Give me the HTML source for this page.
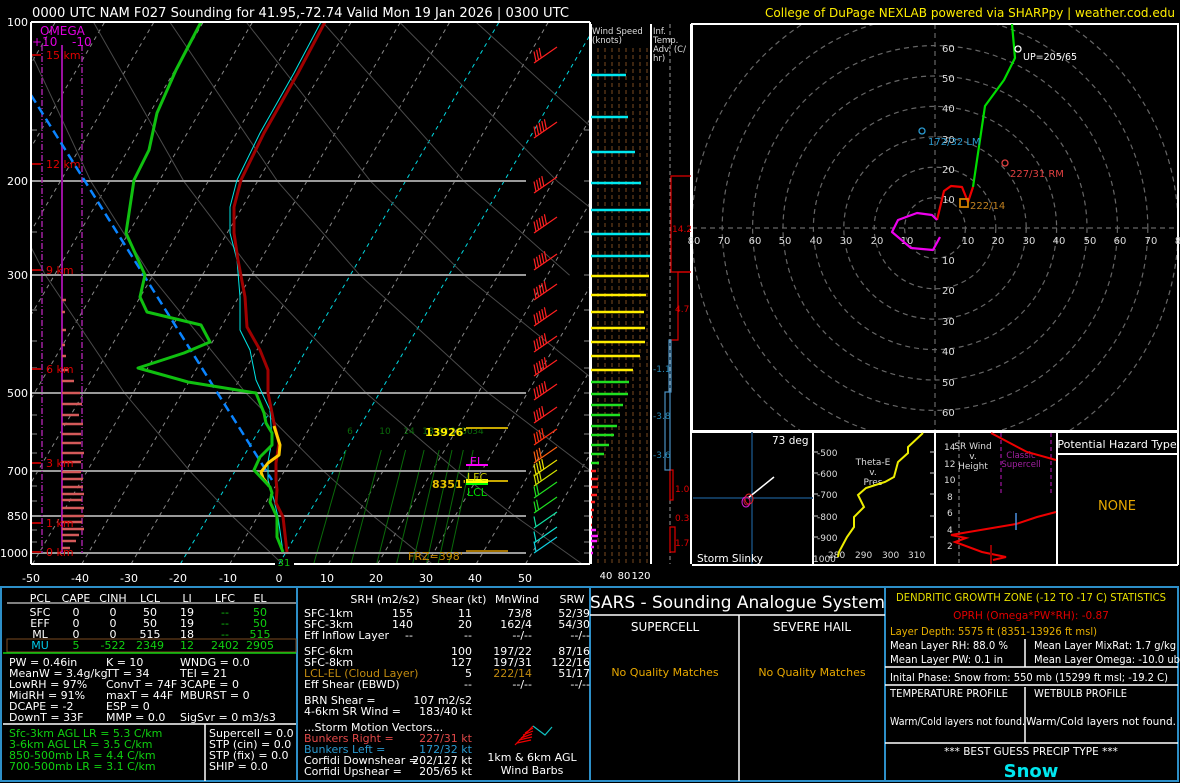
<!DOCTYPE html>
<html><head><meta charset="utf-8"><style>
html,body{margin:0;padding:0;background:#000;width:1180px;height:783px;overflow:hidden}
svg{display:block;font-family:"DejaVu Sans","Liberation Sans",sans-serif}
</style></head><body>
<svg width="1180" height="783" viewBox="0 0 1180 783" xmlns="http://www.w3.org/2000/svg">
<rect width="1180" height="783" fill="#000"/>
<defs>
<clipPath id="skc"><rect x="31" y="22" width="559" height="542"/></clipPath>
<clipPath id="hc"><rect x="692" y="24" width="486" height="407"/></clipPath>
<path id="b1" d="M534,8 L557,-8 M536,6.5 l-2,-10"/>
<path id="b2" d="M534,8 L557,-8 M536,6.5 l-2,-10 M538.6,4.7 l-2,-10"/>
<path id="b3" d="M534,8 L557,-8 M536,6.5 l-2,-10 M538.6,4.7 l-2,-10 M541.2,2.9 l-2,-10"/>
<path id="b4" d="M534,8 L557,-8 M536,6.5 l-2,-10 M538.6,4.7 l-2,-10 M541.2,2.9 l-2,-10 M543.8,1.1 l-2,-10"/>
<path id="b5" d="M534,8 L557,-8 M536,6.5 l-2,-10 M538.6,4.7 l-2,-10 M541.2,2.9 l-2,-10 M543.8,1.1 l-2,-10 M546.4,-0.7 l-2,-10"/>
</defs>
<g clip-path="url(#skc)" fill="none">
<g stroke="#888" stroke-width="1" stroke-dasharray="4 4">
<line x1="-263.3" y1="564" x2="55.4" y2="22"/><line x1="-214" y1="564" x2="104.7" y2="22"/><line x1="-164.7" y1="564" x2="154" y2="22"/><line x1="-115.4" y1="564" x2="203.3" y2="22"/><line x1="-66.1" y1="564" x2="252.6" y2="22"/><line x1="-16.8" y1="564" x2="301.9" y2="22"/><line x1="32.5" y1="564" x2="351.2" y2="22"/><line x1="81.8" y1="564" x2="400.5" y2="22"/><line x1="131.1" y1="564" x2="449.8" y2="22"/><line x1="229.7" y1="564" x2="548.4" y2="22"/><line x1="328.3" y1="564" x2="647" y2="22"/><line x1="377.6" y1="564" x2="696.3" y2="22"/><line x1="426.9" y1="564" x2="745.6" y2="22"/><line x1="476.2" y1="564" x2="794.9" y2="22"/><line x1="525.5" y1="564" x2="844.2" y2="22"/>
</g>
<g stroke="#00d8e0" stroke-width="1" stroke-dasharray="4 4"><line x1="180.4" y1="564" x2="499.1" y2="22"/><line x1="279" y1="564" x2="597.7" y2="22"/></g>
<g stroke="#4a4a4a" stroke-width="1">
<polyline points="282.4,564 231.6,515.5 189.5,470.7 124.6,393.1 45.5,275.3 -2.6,181.8"/>
<polyline points="432.3,564 372.6,515.5 323.1,470.7 245.9,393.1 150.5,275.3 91.1,181.8 16.5,22"/>
<polyline points="582.2,564 514.1,515.5 456.7,470.7 366.2,393.1 255,275.3 184.2,181.8 93.4,22"/>
<polyline points="732,564 655,515.5 590.3,470.7 488.5,393.1 360.1,275.3 277.9,181.8 169.8,22"/>
<polyline points="882,564 796,515.5 724,470.7 610,393.1 464.6,275.3 371.1,181.8 246.2,22"/>
<polyline points="569.6,275.3 464.5,181.8 322.6,22"/>
<polyline points="674.6,275.3 557.9,181.8 399.5,22"/>
<polyline points="651,181.8 475.9,22"/>
<polyline points="552.3,22 600,-20"/>
</g>
<g stroke="#0a6a0a" stroke-width="1">
<line x1="313.7" y1="564" x2="346" y2="450"/><line x1="351" y1="564" x2="381.3" y2="450"/><line x1="376.7" y1="564" x2="405.6" y2="450"/><line x1="396.5" y1="564" x2="424.1" y2="450"/><line x1="412.6" y1="564" x2="439.2" y2="450"/><line x1="426.4" y1="564" x2="452" y2="450"/><line x1="438.1" y1="564" x2="463.3" y2="450"/><line x1="448.6" y1="564" x2="473.2" y2="450"/>
</g>
</g>
<!-- isobars -->
<g stroke="#9a9a9a" stroke-width="2">
<line x1="31" y1="181" x2="526" y2="181"/><line x1="31" y1="275" x2="526" y2="275"/>
<line x1="31" y1="393" x2="526" y2="393"/><line x1="31" y1="471" x2="526" y2="471"/>
<line x1="31" y1="516" x2="526" y2="516"/><line x1="31" y1="553" x2="526" y2="553"/>
</g>
<g stroke="#888" stroke-width="1">
<line x1="31" y1="130" x2="37" y2="130"/><line x1="31" y1="232" x2="37" y2="232"/><line x1="31" y1="310" x2="37" y2="310"/><line x1="31" y1="341" x2="37" y2="341"/><line x1="31" y1="368" x2="37" y2="368"/><line x1="31" y1="415" x2="37" y2="415"/><line x1="31" y1="434" x2="37" y2="434"/><line x1="31" y1="453" x2="37" y2="453"/><line x1="31" y1="486" x2="37" y2="486"/><line x1="31" y1="501" x2="37" y2="501"/><line x1="31" y1="530" x2="37" y2="530"/><line x1="31" y1="542" x2="37" y2="542"/>
<line x1="584" y1="130" x2="590" y2="130"/><line x1="584" y1="181" x2="590" y2="181"/><line x1="584" y1="232" x2="590" y2="232"/><line x1="584" y1="275" x2="590" y2="275"/><line x1="584" y1="310" x2="590" y2="310"/><line x1="584" y1="341" x2="590" y2="341"/><line x1="584" y1="368" x2="590" y2="368"/><line x1="584" y1="393" x2="590" y2="393"/><line x1="584" y1="415" x2="590" y2="415"/><line x1="584" y1="434" x2="590" y2="434"/><line x1="584" y1="453" x2="590" y2="453"/><line x1="584" y1="471" x2="590" y2="471"/><line x1="584" y1="486" x2="590" y2="486"/><line x1="584" y1="501" x2="590" y2="501"/><line x1="584" y1="516" x2="590" y2="516"/><line x1="584" y1="530" x2="590" y2="530"/><line x1="584" y1="542" x2="590" y2="542"/><line x1="584" y1="553" x2="590" y2="553"/>
</g>
<!-- omega -->
<g stroke="#a020a0" stroke-width="1.5" stroke-dasharray="6 2 1 2"><line x1="42" y1="45" x2="42" y2="553"/><line x1="82" y1="45" x2="82" y2="553"/></g>
<line x1="62" y1="45" x2="62" y2="553" stroke="#9a10a0" stroke-width="2"/>
<g stroke="#d45a5a" stroke-width="2.5">
<line x1="62" y1="300" x2="66" y2="300"/><line x1="62" y1="312" x2="65" y2="312"/><line x1="62" y1="330" x2="66" y2="330"/><line x1="62" y1="345" x2="65" y2="345"/><line x1="62" y1="356" x2="66" y2="356"/><line x1="62" y1="370" x2="68" y2="370"/><line x1="62" y1="381" x2="74" y2="381"/><line x1="62" y1="393" x2="80" y2="393"/><line x1="62" y1="404" x2="82" y2="404"/><line x1="62" y1="415" x2="79" y2="415"/><line x1="62" y1="424" x2="83" y2="424"/><line x1="62" y1="434" x2="81" y2="434"/><line x1="62" y1="443" x2="81" y2="443"/><line x1="62" y1="453" x2="84" y2="453"/><line x1="62" y1="462" x2="81" y2="462"/><line x1="62" y1="472" x2="81" y2="472"/><line x1="62" y1="479" x2="83" y2="479"/><line x1="62" y1="487" x2="83" y2="487"/><line x1="62" y1="494" x2="84" y2="494"/><line x1="62" y1="500" x2="82" y2="500"/><line x1="62" y1="508" x2="84" y2="508"/><line x1="62" y1="516" x2="84" y2="516"/><line x1="62" y1="522" x2="82" y2="522"/><line x1="62" y1="529" x2="84" y2="529"/><line x1="62" y1="535" x2="79" y2="535"/><line x1="62" y1="541" x2="76" y2="541"/><line x1="62" y1="548" x2="70" y2="548"/>
</g>
<g fill="#e00000" font-size="11">
<text x="46" y="59">15 km</text><text x="46" y="168">12 km</text><text x="46" y="274">9 km</text><text x="46" y="373">6 km</text><text x="46" y="467">3 km</text><text x="46" y="527">1 km</text><text x="46" y="556">0 km</text>
</g>
<g stroke="#b00000" stroke-width="2"><line x1="31" y1="55" x2="41" y2="55"/><line x1="31" y1="164" x2="41" y2="164"/><line x1="31" y1="270" x2="41" y2="270"/><line x1="31" y1="369" x2="41" y2="369"/><line x1="31" y1="463" x2="41" y2="463"/><line x1="31" y1="523" x2="41" y2="523"/><line x1="31" y1="552" x2="41" y2="552"/></g>
<text x="40" y="35" fill="#e000e0" font-size="12">OMEGA</text>
<text x="32" y="46" fill="#e000e0" font-size="12">+10</text><text x="72" y="46" fill="#e000e0" font-size="12">-10</text>
<!-- profiles -->
<g clip-path="url(#skc)" fill="none" stroke-linejoin="round">
<polyline stroke="#0a84ff" stroke-width="2.5" stroke-dasharray="9 5" points="31,95 272,480"/>
<polyline stroke="#00e5e5" stroke-width="1" points="321,22 294,73 260,133 237,180 230,207 230,233 237,260 240,297 240,330 250,350 256,380 262,393 270,410 272,440 268,462 268,480 274,500 278,517 283,552"/>
<polyline stroke="#a00000" stroke-width="3" points="325,22 298,73 264,133 241,180 234,207 234,233 238,260 245,297 247,327 260,350 268,370 268,393 274,423 279,443 276,463 276,480 277,490 276,503 283,517 287,552"/>
<polyline stroke="#ffcc00" stroke-width="3" points="274,426 280,445 279,455 268,463 261,472 263,478 269,486"/>
<polyline stroke="#10c010" stroke-width="3" points="201,22 176,70 157,113 149,150 134,180 126,233 145,275 140,297 147,312 201,325 210,342 184,353 138,368 188,382 256,393 264,413 266,423 272,433 272,445 260,457 254,470 270,487 272,493 270,502 277,517 277,537 283,552"/>
</g>
<!-- frame -->
<g stroke="#fff" stroke-width="2"><line x1="31" y1="22" x2="590" y2="22"/><line x1="31" y1="564" x2="275" y2="564"/><line x1="294" y1="564" x2="590" y2="564"/><line x1="31" y1="22" x2="31" y2="564"/><line x1="590" y1="22" x2="590" y2="564"/></g>
<text x="284" y="566" fill="#10c010" font-size="10" text-anchor="middle">31</text>
<g fill="#fff" font-size="11" text-anchor="end">
<text x="28" y="26">100</text><text x="28" y="185">200</text><text x="28" y="279">300</text><text x="28" y="397">500</text><text x="28" y="475">700</text><text x="28" y="520">850</text><text x="28" y="557">1000</text>
</g>
<g fill="#fff" font-size="11" text-anchor="middle">
<text x="31" y="582">-50</text><text x="80" y="582">-40</text><text x="129" y="582">-30</text><text x="178" y="582">-20</text><text x="228" y="582">-10</text><text x="279" y="582">0</text><text x="327" y="582">10</text><text x="376" y="582">20</text><text x="426" y="582">30</text><text x="475" y="582">40</text><text x="525" y="582">50</text>
</g>
<!-- markers -->
<g font-size="9" fill="#0a6a0a" text-anchor="middle"><text x="350" y="434">6</text><text x="385" y="434">10</text><text x="409" y="434">14</text><text x="428" y="434">18</text><text x="443" y="434">22</text><text x="456" y="434">26</text><text x="467" y="434">30</text><text x="478" y="434">34</text></g>
<line x1="466" y1="428" x2="508" y2="428" stroke="#c8a800" stroke-width="2"/>
<text x="425" y="436" fill="#ffee00" font-size="11" font-weight="bold">13926'</text>
<line x1="466" y1="481" x2="508" y2="481" stroke="#c8a800" stroke-width="2"/>
<text x="432" y="488" fill="#e8c000" font-size="11" font-weight="bold">8351'</text>
<line x1="466" y1="551" x2="508" y2="551" stroke="#a07000" stroke-width="2"/>
<text x="408" y="560" fill="#c88a00" font-size="11">FRZ=398'</text>
<line x1="466" y1="465" x2="488" y2="465" stroke="#ff00ff" stroke-width="2"/>
<text x="470" y="465" fill="#ff00ff" font-size="11">EL</text>
<rect x="466" y="479" width="22" height="4" fill="#ffff00"/>
<text x="467" y="481" fill="#cccc00" font-size="11">LFC</text>
<line x1="466" y1="484" x2="488" y2="484" stroke="#00ff00" stroke-width="2"/>
<text x="467" y="496" fill="#00dd00" font-size="11">LCL</text>
<!-- barbs -->
<g fill="none" stroke-width="1.2">
<use href="#b3" y="55" stroke="#ff2020"/><use href="#b5" y="130" stroke="#ff2020"/><use href="#b4" y="185" stroke="#ff2020"/><use href="#b5" y="225" stroke="#ff2020"/><use href="#b5" y="262" stroke="#ff2020"/><use href="#b5" y="292" stroke="#ff2020"/><use href="#b5" y="318" stroke="#ff2020"/><use href="#b5" y="344" stroke="#ff2020"/><use href="#b5" y="368" stroke="#ff2020"/><use href="#b5" y="392" stroke="#ff2020"/><use href="#b4" y="415" stroke="#ff2020"/><use href="#b4" y="437" stroke="#ff3010"/><use href="#b3" y="455" stroke="#ff6010"/><use href="#b4" y="468" stroke="#e8e000"/><use href="#b3" y="478" stroke="#d0e000"/><use href="#b2" y="490" stroke="#20e020"/><use href="#b2" y="505" stroke="#20e020"/><use href="#b1" y="520" stroke="#10e0a0"/><use href="#b1" y="535" stroke="#10e0d0"/><use href="#b1" y="545" stroke="#10d0e0"/>
</g>
<!-- wind speed panel -->
<line x1="591" y1="24" x2="591" y2="564" stroke="#fff" stroke-width="2"/>
<line x1="651" y1="24" x2="651" y2="564" stroke="#fff" stroke-width="2"/>
<g stroke="#7a4a20" stroke-dasharray="4 3"><line x1="598" y1="48" x2="598" y2="564"/><line x1="605" y1="48" x2="605" y2="564"/><line x1="612" y1="48" x2="612" y2="564"/><line x1="619" y1="48" x2="619" y2="564"/><line x1="626" y1="48" x2="626" y2="564"/><line x1="633" y1="48" x2="633" y2="564"/><line x1="640" y1="48" x2="640" y2="564"/><line x1="647" y1="48" x2="647" y2="564"/></g>
<g stroke-width="2.5">
<g stroke="#00e8f0"><line x1="591" y1="75" x2="626" y2="75"/><line x1="591" y1="117" x2="628" y2="117"/><line x1="591" y1="152" x2="635" y2="152"/><line x1="591" y1="183" x2="641" y2="183"/><line x1="591" y1="210" x2="650" y2="210"/><line x1="591" y1="234" x2="650" y2="234"/><line x1="591" y1="256" x2="650" y2="256"/></g>
<g stroke="#ffee00"><line x1="591" y1="276" x2="649" y2="276"/><line x1="591" y1="295" x2="646" y2="295"/><line x1="591" y1="312" x2="644" y2="312"/><line x1="591" y1="328" x2="645" y2="328"/><line x1="591" y1="342" x2="645" y2="342"/><line x1="591" y1="356" x2="640" y2="356"/><line x1="591" y1="370" x2="633" y2="370"/></g>
<g stroke="#20e020"><line x1="591" y1="382" x2="629" y2="382"/><line x1="591" y1="394" x2="628" y2="394"/><line x1="591" y1="405" x2="623" y2="405"/><line x1="591" y1="415" x2="620" y2="415"/><line x1="591" y1="426" x2="617" y2="426"/><line x1="591" y1="435" x2="614" y2="435"/><line x1="591" y1="445" x2="609" y2="445"/><line x1="591" y1="454" x2="604" y2="454"/><line x1="591" y1="463" x2="599" y2="463"/></g>
<g stroke="#ff2020"><line x1="591" y1="471" x2="596" y2="471"/><line x1="591" y1="479" x2="598" y2="479"/><line x1="591" y1="487" x2="598" y2="487"/><line x1="591" y1="495" x2="597" y2="495"/><line x1="591" y1="502" x2="595" y2="502"/><line x1="591" y1="510" x2="594" y2="510"/><line x1="591" y1="517" x2="593" y2="517"/><line x1="591" y1="525" x2="592" y2="525"/></g>
<g stroke="#ff20ff"><line x1="591" y1="530" x2="596" y2="530"/><line x1="591" y1="536" x2="598" y2="536"/><line x1="591" y1="541" x2="597" y2="541"/><line x1="591" y1="547" x2="594" y2="547"/><line x1="591" y1="553" x2="593" y2="553"/></g>
</g>
<text x="592" y="34" fill="#ddd" font-size="8.5">Wind Speed</text><text x="592" y="43" fill="#ddd" font-size="8.5">(knots)</text>
<text x="606" y="579" fill="#fff" font-size="10" text-anchor="middle">40</text><text x="624" y="579" fill="#fff" font-size="10" text-anchor="middle">80</text><text x="641" y="579" fill="#fff" font-size="10" text-anchor="middle">120</text>
<!-- temp adv -->
<line x1="670" y1="24" x2="670" y2="564" stroke="#999" stroke-dasharray="4 3"/>
<line x1="691" y1="24" x2="691" y2="564" stroke="#fff" stroke-width="2"/>
<g fill="#ddd" font-size="8.5"><text x="653" y="34">Inf.</text><text x="653" y="43">Temp.</text><text x="653" y="52">Adv. (C/</text><text x="653" y="61">hr)</text></g>
<g fill="none" stroke="#e00000" stroke-width="1.2"><polyline points="691,176 671,176 671,272 691,272"/><polyline points="691,272 678,272 678,340 671,340"/><rect x="670" y="470" width="3" height="30"/><rect x="670" y="527" width="5" height="25"/></g>
<g fill="none" stroke="#4a90c0" stroke-width="1.2"><rect x="669" y="340" width="2" height="52"/><rect x="665" y="392" width="5" height="78"/></g>
<g font-size="9"><text x="672" y="232" fill="#e00000">14.2</text><text x="675" y="312" fill="#e00000">4.7</text><text x="653" y="372" fill="#2a8ab8">-1.1</text><text x="653" y="419" fill="#2a8ab8">-3.8</text><text x="653" y="458" fill="#2a8ab8">-3.6</text><text x="675" y="492" fill="#e00000">1.0</text><text x="675" y="521" fill="#e00000">0.3</text><text x="675" y="546" fill="#e00000">1.7</text></g>
<!-- hodograph -->
<g clip-path="url(#hc)" fill="none" stroke="#666" stroke-dasharray="5 4" stroke-width="1.2">
<line x1="935" y1="24" x2="935" y2="431"/><line x1="692" y1="228" x2="1178" y2="228"/>
<circle cx="935" cy="228" r="30.4"/><circle cx="935" cy="228" r="60.8"/><circle cx="935" cy="228" r="91.2"/><circle cx="935" cy="228" r="121.6"/><circle cx="935" cy="228" r="152"/><circle cx="935" cy="228" r="182.4"/><circle cx="935" cy="228" r="212.8"/><circle cx="935" cy="228" r="243.2"/>
</g>
<rect x="692" y="24" width="486" height="407" fill="none" stroke="#fff" stroke-width="2"/>
<g fill="#ddd" font-size="10">
<text x="942" y="52">60</text><text x="942" y="82">50</text><text x="942" y="112">40</text><text x="942" y="143">30</text><text x="942" y="173">20</text><text x="942" y="203">10</text>
<text x="942" y="264">10</text><text x="942" y="294">20</text><text x="942" y="325">30</text><text x="942" y="355">40</text><text x="942" y="386">50</text><text x="942" y="416">60</text>
</g>
<g fill="#ddd" font-size="10" text-anchor="middle">
<text x="694" y="244">80</text><text x="724" y="244">70</text><text x="755" y="244">60</text><text x="785" y="244">50</text><text x="816" y="244">40</text><text x="846" y="244">30</text><text x="877" y="244">20</text><text x="907" y="244">10</text>
<text x="968" y="244">10</text><text x="998" y="244">20</text><text x="1029" y="244">30</text><text x="1059" y="244">40</text><text x="1090" y="244">50</text><text x="1120" y="244">60</text><text x="1151" y="244">70</text><text x="1178" y="244">8</text>
</g>
<g clip-path="url(#hc)" fill="none" stroke-width="2.2" stroke-linejoin="round">
<polyline stroke="#00dd00" points="1012,24 1015,58 1004,80 985,106 973,187"/>
<polyline stroke="#ee0000" points="973,187 968,202 962,187 951,186 944,191 937,220"/>
<polyline stroke="#ee00ee" points="937,220 932,215 917,213 898,220 892,232 911,248 933,250 940,237"/>
</g>
<circle cx="1018" cy="49" r="3" fill="none" stroke="#fff" stroke-width="1.3"/>
<text x="1023" y="60" fill="#fff" font-size="9.5">UP=205/65</text>
<circle cx="922" cy="131" r="3" fill="none" stroke="#2a9ad0" stroke-width="1.3"/>
<text x="928" y="145" fill="#2a9ad0" font-size="10">172/32 LM</text>
<circle cx="1005" cy="163" r="3" fill="none" stroke="#e04040" stroke-width="1.3"/>
<text x="1010" y="177" fill="#e04040" font-size="10">227/31 RM</text>
<rect x="960" y="199" width="8" height="8" fill="none" stroke="#d08000" stroke-width="1.8"/>
<text x="970" y="209" fill="#c08020" font-size="10">222/14</text>
<!-- small panels -->
<g stroke="#fff" stroke-width="2" fill="none">
<line x1="692" y1="432" x2="1178" y2="432"/><line x1="692" y1="565" x2="1178" y2="565"/>
<line x1="813" y1="432" x2="813" y2="565"/><line x1="935" y1="432" x2="935" y2="565"/><line x1="1057" y1="432" x2="1057" y2="565"/><line x1="1178" y1="432" x2="1178" y2="565"/>
<line x1="1057" y1="454" x2="1178" y2="454"/>
</g>
<g stroke="#174a78" stroke-width="1.5"><line x1="752" y1="432" x2="752" y2="564"/><line x1="693" y1="498" x2="813" y2="498"/></g>
<line x1="748" y1="498" x2="774" y2="477" stroke="#fff" stroke-width="1.5"/>
<g fill="none" stroke-width="1"><ellipse cx="749" cy="499" rx="4" ry="5" stroke="#e02020"/><ellipse cx="746" cy="502" rx="4" ry="5" stroke="#e020e0"/><ellipse cx="747" cy="501" rx="3" ry="4" stroke="#c01050"/></g>
<text x="772" y="444" fill="#fff" font-size="10.5">73 deg</text>
<text x="697" y="562" fill="#fff" font-size="10.5">Storm Slinky</text>
<g stroke="#ccc"><line x1="813" y1="452" x2="818" y2="452"/><line x1="813" y1="473" x2="818" y2="473"/><line x1="813" y1="494" x2="818" y2="494"/><line x1="813" y1="516" x2="818" y2="516"/><line x1="813" y1="537" x2="818" y2="537"/><line x1="930" y1="452" x2="935" y2="452"/><line x1="930" y1="473" x2="935" y2="473"/><line x1="930" y1="494" x2="935" y2="494"/><line x1="930" y1="516" x2="935" y2="516"/><line x1="930" y1="537" x2="935" y2="537"/></g>
<g fill="#ddd" font-size="9"><text x="817" y="456">-500</text><text x="817" y="477">-600</text><text x="817" y="498">-700</text><text x="817" y="520">-800</text><text x="817" y="541">-900</text><text x="813" y="562">1000</text>
<text x="828" y="558">280</text><text x="855" y="558">290</text><text x="882" y="558">300</text><text x="908" y="558">310</text></g>
<g fill="#ddd" font-size="9" text-anchor="middle"><text x="873" y="465">Theta-E</text><text x="873" y="475">v.</text><text x="873" y="485">Pres</text></g>
<polyline fill="none" stroke="#eeee00" stroke-width="2" points="923,433 908,447 908,453 898,462 894,477 885,482 866,488 858,495 864,507 854,517 854,527 847,537 839,552 838,557"/>
<line x1="959" y1="433" x2="959" y2="564" stroke="#999" stroke-dasharray="4 3"/>
<g stroke="#801080" stroke-dasharray="4 3" stroke-width="1.5"><line x1="1001" y1="433" x2="1001" y2="495"/><line x1="1051" y1="433" x2="1051" y2="495"/></g>
<g fill="#ddd" font-size="9"><text x="944" y="450">14</text><text x="944" y="467">12</text><text x="944" y="483">10</text><text x="947" y="500">8</text><text x="947" y="516">6</text><text x="947" y="533">4</text><text x="947" y="549">2</text></g>
<g fill="#ddd" font-size="9" text-anchor="middle"><text x="973" y="449">SR Wind</text><text x="973" y="459">v.</text><text x="973" y="469">Height</text></g>
<g fill="#a020a0" font-size="8.5" text-anchor="middle"><text x="1021" y="458">Classic</text><text x="1021" y="467">Supercell</text></g>
<g fill="none" stroke="#ee0000" stroke-width="2"><polyline points="991,433 1027,452 1056,460"/><polyline points="1056,512 1037,517 1016,524 951,535 966,538 955,542 982,552 1006,557 993,560"/></g>
<line x1="1016" y1="513" x2="1016" y2="530" stroke="#4a90e0" stroke-width="1.5"/>
<line x1="991" y1="545" x2="991" y2="564" stroke="#900000" stroke-width="2"/>
<text x="1117" y="448" fill="#fff" font-size="11" text-anchor="middle">Potential Hazard Type</text>
<text x="1117" y="510" fill="#e8a800" font-size="13" text-anchor="middle">NONE</text>
<!-- titles -->
<text x="32" y="17" fill="#fff" font-size="13" textLength="537" lengthAdjust="spacingAndGlyphs">0000 UTC NAM F027 Sounding for 41.95,-72.74 Valid  Mon 19 Jan 2026 | 0300 UTC</text>
<text x="765" y="17" fill="#ffee00" font-size="12.5" textLength="410" lengthAdjust="spacingAndGlyphs">College of DuPage NEXLAB powered via SHARPpy | weather.cod.edu</text>
<!-- bottom panel -->
<rect x="1" y="587" width="1177" height="194" fill="none" stroke="#2d8fc8" stroke-width="2"/>
<g stroke="#2d8fc8" stroke-width="2"><line x1="297" y1="587" x2="297" y2="781"/><line x1="590" y1="587" x2="590" y2="781"/><line x1="885" y1="587" x2="885" y2="781"/></g>
<g font-size="11" text-anchor="middle" fill="#fff">
<text x="40" y="602">PCL</text><text x="76" y="602">CAPE</text><text x="113" y="602">CINH</text><text x="150" y="602">LCL</text><text x="187" y="602">LI</text><text x="225" y="602">LFC</text><text x="260" y="602">EL</text>
<text x="40" y="616">SFC</text><text x="76" y="616">0</text><text x="113" y="616">0</text><text x="150" y="616">50</text><text x="187" y="616">19</text><text x="225" y="616" fill="#10c010">--</text><text x="260" y="616" fill="#10d010">50</text>
<text x="40" y="627">EFF</text><text x="76" y="627">0</text><text x="113" y="627">0</text><text x="150" y="627">50</text><text x="187" y="627">19</text><text x="225" y="627" fill="#10c010">--</text><text x="260" y="627" fill="#10d010">50</text>
<text x="40" y="638">ML</text><text x="76" y="638">0</text><text x="113" y="638">0</text><text x="150" y="638">515</text><text x="187" y="638">18</text><text x="225" y="638" fill="#10c010">--</text><text x="260" y="638" fill="#10d010">515</text>
<text x="40" y="649" fill="#00c8e8">MU</text><g fill="#10d010"><text x="76" y="649">5</text><text x="113" y="649">-522</text><text x="150" y="649">2349</text><text x="187" y="649">12</text><text x="225" y="649">2402</text><text x="260" y="649">2905</text></g>
</g>
<line x1="7" y1="603" x2="296" y2="603" stroke="#fff"/>
<rect x="7" y="639" width="289" height="13" fill="none" stroke="#7a4a20"/>
<line x1="3" y1="653" x2="296" y2="653" stroke="#10d010" stroke-width="1.5"/>
<g font-size="11" fill="#fff">
<text x="9" y="666">PW = 0.46in</text><text x="106" y="666">K = 10</text><text x="180" y="666">WNDG = 0.0</text>
<text x="9" y="677">MeanW = 3.4g/kg</text><text x="106" y="677">TT = 34</text><text x="180" y="677">TEI = 21</text>
<text x="9" y="688">LowRH = 97%</text><text x="106" y="688">ConvT = 74F</text><text x="180" y="688">3CAPE = 0</text>
<text x="9" y="699">MidRH = 91%</text><text x="106" y="699">maxT = 44F</text><text x="180" y="699">MBURST = 0</text>
<text x="9" y="710">DCAPE = -2</text><text x="106" y="710">ESP = 0</text>
<text x="9" y="721">DownT = 33F</text><text x="106" y="721">MMP = 0.0</text><text x="180" y="721">SigSvr = 0 m3/s3</text>
</g>
<line x1="3" y1="724" x2="296" y2="724" stroke="#fff" stroke-width="1.5"/>
<line x1="205" y1="724" x2="205" y2="781" stroke="#fff" stroke-width="1.5"/>
<g font-size="11" fill="#10d010"><text x="9" y="737">Sfc-3km AGL LR = 5.3 C/km</text><text x="9" y="748">3-6km AGL LR = 3.5 C/km</text><text x="9" y="759">850-500mb LR = 4.4 C/km</text><text x="9" y="770">700-500mb LR = 3.1 C/km</text></g>
<g font-size="11" fill="#fff"><text x="209" y="737">Supercell = 0.0</text><text x="209" y="748">STP (cin) = 0.0</text><text x="209" y="759">STP (fix) = 0.0</text><text x="209" y="770">SHIP = 0.0</text></g>
<g font-size="11" fill="#fff">
<text x="385" y="603" text-anchor="middle">SRH (m2/s2)</text><text x="459" y="603" text-anchor="middle">Shear (kt)</text><text x="517" y="603" text-anchor="middle">MnWind</text><text x="572" y="603" text-anchor="middle">SRW</text>
<text x="304" y="617">SFC-1km</text><text x="304" y="628">SFC-3km</text><text x="304" y="639">Eff Inflow Layer</text>
<text x="304" y="655">SFC-6km</text><text x="304" y="666">SFC-8km</text><text x="304" y="677" fill="#c08a10">LCL-EL (Cloud Layer)</text><text x="304" y="688">Eff Shear (EBWD)</text>
<text x="304" y="704">BRN Shear =</text><text x="304" y="715">4-6km SR Wind =</text><text x="304" y="731">...Storm Motion Vectors...</text>
<text x="304" y="742" fill="#e04848">Bunkers Right =</text><text x="304" y="753" fill="#2a9ad0">Bunkers Left =</text><text x="304" y="764">Corfidi Downshear =</text><text x="304" y="775">Corfidi Upshear =</text>
</g>
<g font-size="11" fill="#fff" text-anchor="end">
<text x="413" y="617">155</text><text x="472" y="617">11</text><text x="532" y="617">73/8</text><text x="590" y="617">52/39</text>
<text x="413" y="628">140</text><text x="472" y="628">20</text><text x="532" y="628">162/4</text><text x="590" y="628">54/30</text>
<text x="413" y="639">--</text><text x="472" y="639">--</text><text x="532" y="639">--/--</text><text x="590" y="639">--/--</text>
<text x="472" y="655">100</text><text x="532" y="655">197/22</text><text x="590" y="655">87/16</text>
<text x="472" y="666">127</text><text x="532" y="666">197/31</text><text x="590" y="666">122/16</text>
<text x="472" y="677">5</text><text x="532" y="677" fill="#c08a10">222/14</text><text x="590" y="677">51/17</text>
<text x="472" y="688">--</text><text x="532" y="688">--/--</text><text x="590" y="688">--/--</text>
<text x="472" y="704">107 m2/s2</text><text x="472" y="715">183/40 kt</text>
<text x="472" y="742" fill="#e04848">227/31 kt</text><text x="472" y="753" fill="#2a9ad0">172/32 kt</text><text x="472" y="764">202/127 kt</text><text x="472" y="775">205/65 kt</text>
</g>
<g fill="none" stroke-width="1.2"><g stroke="#ee0000"><line x1="515" y1="745" x2="533" y2="726"/><line x1="517" y1="743" x2="531" y2="740"/><line x1="519" y1="740" x2="532" y2="737"/><line x1="521" y1="738" x2="532" y2="734"/><line x1="523" y1="735" x2="533" y2="731"/><line x1="525" y1="733" x2="533" y2="728"/></g><polyline stroke="#10c0c0" points="533,726 545,735 552,727"/></g>
<text x="532" y="761" fill="#fff" font-size="11" text-anchor="middle">1km &amp; 6km AGL</text>
<text x="532" y="774" fill="#fff" font-size="11" text-anchor="middle">Wind Barbs</text>
<text x="590" y="608" fill="#fff" font-size="17" textLength="295" lengthAdjust="spacingAndGlyphs">SARS - Sounding Analogue System</text>
<line x1="590" y1="615" x2="885" y2="615" stroke="#fff" stroke-width="1.5"/>
<line x1="739" y1="615" x2="739" y2="781" stroke="#fff" stroke-width="1.5"/>
<g font-size="12" fill="#fff" text-anchor="middle"><text x="665" y="631">SUPERCELL</text><text x="812" y="631">SEVERE HAIL</text></g>
<g font-size="11" fill="#e8a800" text-anchor="middle"><text x="665" y="676">No Quality Matches</text><text x="812" y="676">No Quality Matches</text></g>
<text x="1031" y="601" fill="#e8e000" font-size="10.5" text-anchor="middle" textLength="270" lengthAdjust="spacingAndGlyphs">DENDRITIC GROWTH ZONE (-12 TO -17 C) STATISTICS</text>
<text x="1031" y="619" fill="#e00000" font-size="10.5" text-anchor="middle">OPRH (Omega*PW*RH): -0.87</text>
<text x="890" y="635" fill="#e8b000" font-size="10.5" textLength="207" lengthAdjust="spacingAndGlyphs">Layer Depth: 5575 ft (8351-13926 ft msl)</text>
<g font-size="10.5" fill="#fff">
<text x="890" y="649" textLength="118" lengthAdjust="spacingAndGlyphs">Mean Layer RH: 88.0 %</text><text x="1034" y="649" textLength="142" lengthAdjust="spacingAndGlyphs">Mean Layer MixRat: 1.7 g/kg</text>
<text x="890" y="663" textLength="113" lengthAdjust="spacingAndGlyphs">Mean Layer PW: 0.1 in</text><text x="1034" y="663" textLength="146" lengthAdjust="spacingAndGlyphs">Mean Layer Omega: -10.0 ub</text>
<text x="890" y="681" textLength="278" lengthAdjust="spacingAndGlyphs">Inital Phase: Snow from: 550 mb (15299 ft msl; -19.2 C)</text>
<text x="890" y="697" textLength="118" lengthAdjust="spacingAndGlyphs">TEMPERATURE PROFILE</text><text x="1034" y="697" textLength="93" lengthAdjust="spacingAndGlyphs">WETBULB PROFILE</text>
<text x="890" y="725" textLength="135" lengthAdjust="spacingAndGlyphs">Warm/Cold layers not found.</text><text x="1026" y="725" textLength="150" lengthAdjust="spacingAndGlyphs">Warm/Cold layers not found.</text>
<text x="1031" y="755" text-anchor="middle">*** BEST GUESS PRECIP TYPE ***</text>
</g>
<g stroke="#fff" stroke-width="1.5"><line x1="1025" y1="639" x2="1025" y2="667"/><line x1="885" y1="667" x2="1178" y2="667"/><line x1="885" y1="685" x2="1178" y2="685"/><line x1="1025" y1="687" x2="1025" y2="743"/><line x1="885" y1="743" x2="1178" y2="743"/></g>
<text x="1031" y="777" fill="#00e8f0" font-size="18" font-weight="bold" text-anchor="middle">Snow</text>
</svg>
</body></html>
